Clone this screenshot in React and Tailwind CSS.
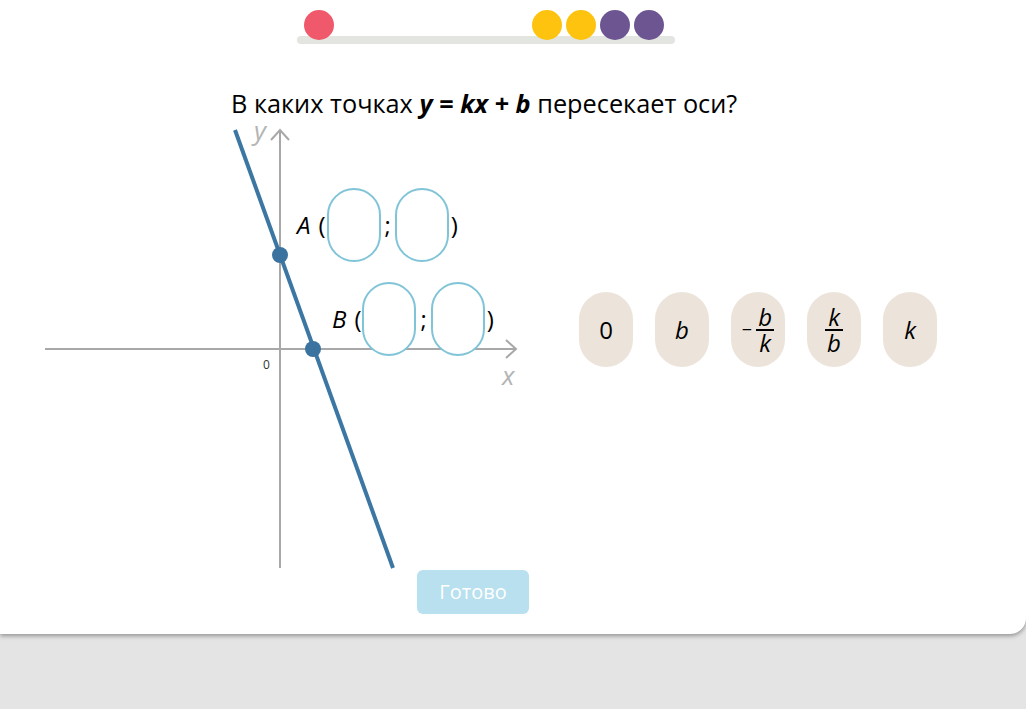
import React from "react";

const font = { fontFamily: '"Open Sans", "Noto Sans", sans-serif' };

const Slot = () => (
  <div className="w-[54px] h-[74px] rounded-full border-2 border-[#80c4d8] bg-white" />
);

const PointRow = ({ name, className }) => (
  <div className={`absolute flex items-center text-[24px] text-black ${className}`}>
    <span className="italic mr-[8px]">{name}</span>
    <span className="mr-[1px]">(</span>
    <Slot />
    <span className="mx-[4px]">;</span>
    <Slot />
    <span className="ml-[2px]">)</span>
  </div>
);

const Chip = ({ children }) => (
  <button className="w-[54px] h-[75px] rounded-full bg-[#ece4da] flex items-center justify-center text-[24px] text-black">
    {children}
  </button>
);

const Frac = ({ top, bottom }) => (
  <span className="inline-flex flex-col items-center leading-[24px] italic">
    <span>{top}</span>
    <span className="w-[18px] h-[2px] bg-black" />
    <span>{bottom}</span>
  </span>
);

const Graph = () => (
  <div className="relative w-[480px] h-[445px] ml-[40px] shrink-0">
    <svg width="480" height="445" viewBox="0 0 480 445" className="absolute inset-0 overflow-visible">
      {/* axes */}
      <g stroke="#a8a8a8" strokeWidth="2" fill="none">
        <line x1="5" y1="224" x2="476" y2="224" />
        <polyline points="466,215 476,224 466,233" />
        <line x1="240" y1="443" x2="240" y2="5" />
        <polyline points="231,15 240,5 249,15" />
      </g>
      <text x="214" y="15" fontSize="26" fontStyle="italic" fill="#b4b4b4" style={font}>y</text>
      <text x="462" y="260" fontSize="26" fontStyle="italic" fill="#b4b4b4" style={font}>x</text>
      <text x="223" y="244" fontSize="12" fill="#333" style={font}>0</text>
      {/* y = kx + b */}
      <line x1="195" y1="5" x2="353" y2="443" stroke="#3b77a2" strokeWidth="4" />
      <circle cx="240" cy="130" r="8" fill="#3a72a0" />
      <circle cx="273" cy="224" r="8" fill="#3a72a0" />
    </svg>
    <PointRow name="A" className="left-[257px] top-[63px]" />
    <PointRow name="B" className="left-[292px] top-[157px]" />
  </div>
);

export default function App() {
  return (
    <div className="min-h-[709px] bg-[#e3e4e3]" style={font}>
      <div className="bg-white h-[634px] rounded-br-2xl shadow-[0_2px_4px_rgba(0,0,0,0.35)] flex flex-col">
        {/* progress */}
        <div className="ml-[297px] mt-[10px] w-[378px] relative">
          <div className="flex items-center pl-[7px] gap-[4px] relative z-10">
            <span className="w-[30px] h-[30px] rounded-full bg-[#f0596b]" />
            <span className="w-[30px] h-[30px] rounded-full bg-[#fdc30f] ml-[194px]" />
            <span className="w-[30px] h-[30px] rounded-full bg-[#fdc30f]" />
            <span className="w-[30px] h-[30px] rounded-full bg-[#6d5592]" />
            <span className="w-[30px] h-[30px] rounded-full bg-[#6d5592]" />
          </div>
          <div className="h-[8px] -mt-[4px] rounded-full bg-[#e3e5e0]" />
        </div>

        <h1 className="ml-[231px] mt-[44px] text-[25.3px] leading-[30px] text-black">
          В каких точках <b className="italic">y = kx + b</b> пересекает оси?
        </h1>

        <div className="flex mt-[7px]">
          <Graph />
          <div className="flex gap-[22px] ml-[59px] mt-[167px] h-[75px]">
            <Chip>0</Chip>
            <Chip><span className="italic">b</span></Chip>
            <Chip>
              <span className="flex items-center gap-[4px]">
                <span className="text-[18px]">−</span>
                <Frac top="b" bottom="k" />
              </span>
            </Chip>
            <Chip><Frac top="k" bottom="b" /></Chip>
            <Chip><span className="italic">k</span></Chip>
          </div>
        </div>

        <button className="ml-[417px] w-[112px] h-[44px] rounded-md bg-[#b8e0ee] text-white text-[20px]">
          Готово
        </button>
      </div>
    </div>
  );
}
